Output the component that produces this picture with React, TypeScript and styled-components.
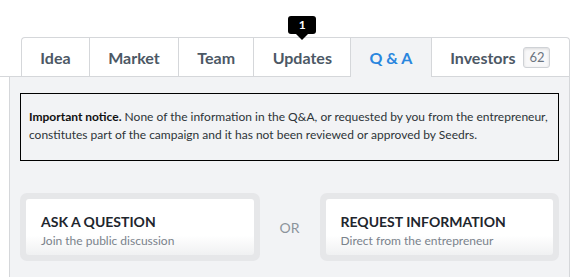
import React from 'react';
import styled, { createGlobalStyle } from 'styled-components';

const GlobalStyle = createGlobalStyle`
  body {
    margin: 0;
    background: #fff;
    font-family: Lato, "Open Sans", sans-serif;
  }
`;

interface Tab {
  label: string;
  count?: number;
  note?: number;
}

const tabs: Array<Tab> = [
  { label: 'Idea' },
  { label: 'Market' },
  { label: 'Team' },
  { label: 'Updates', note: 1 },
  { label: 'Q & A' },
  { label: 'Investors', count: 62 },
];

const App = () => {
  const active = 'Q & A';

  return (
    <Page>
      <GlobalStyle />
      <Nav>
        <TabList>
          {tabs.map((tab) => (
            <TabItem key={tab.label} active={tab.label === active}>
              {tab.label}
              {tab.count !== undefined && <Count>{tab.count}</Count>}
              {tab.note !== undefined && <Note>{tab.note}</Note>}
            </TabItem>
          ))}
        </TabList>
      </Nav>
      <Panel>
        <Notice>
          <strong>Important notice.</strong> None of the information in the
          Q&amp;A, or requested by you from the entrepreneur, constitutes part
          of the campaign and it has not been reviewed or approved by Seedrs.
        </Notice>
        <Actions>
          <Card>
            <CardInner>
              <CardTitle>ASK A QUESTION</CardTitle>
              <CardText>Join the public discussion</CardText>
            </CardInner>
          </Card>
          <Or>OR</Or>
          <Card>
            <CardInner>
              <CardTitle>REQUEST INFORMATION</CardTitle>
              <CardText>Direct from the entrepreneur</CardText>
            </CardInner>
          </Card>
        </Actions>
      </Panel>
    </Page>
  );
};

export default App;

const Page = styled.div`
  width: 570px;
  padding-top: 37px;
  height: 240px;
  overflow: hidden;
`;

const Nav = styled.div`
  display: flex;
  padding-left: 21px;
  border-bottom: 1px solid #d5d7da;
`;

const TabList = styled.div`
  display: flex;
  flex: 1;
`;

const TabItem = styled.div<{ active?: boolean }>`
  position: relative;
  display: flex;
  flex-shrink: 0;
  align-items: center;
  justify-content: center;
  padding: 0 18.3px;
  white-space: nowrap;
  border-top: 1px solid #d5d7da;
  border-left: 1px solid #d5d7da;
  background: ${(p) => (p.active ? '#f2f3f5' : '#fff')};
  color: ${(p) => (p.active ? '#2a86de' : '#4c5865')};
  font-size: 16px;
  font-weight: 700;
  margin-bottom: ${(p) => (p.active ? '-1px' : '0')};
  height: ${(p) => (p.active ? '39px' : '38px')};
  &:first-child {
    border-top-left-radius: 4px;
  }
  &:last-child {
    flex: 1 1 auto;
    border-right: 1px solid #d5d7da;
    border-top-right-radius: 4px;
  }
`;

const Count = styled.span`
  display: inline-flex;
  align-items: center;
  justify-content: center;
  margin-left: 8px;
  width: 27px;
  height: 21px;
  box-sizing: border-box;
  border: 1px solid #cfd2d6;
  border-radius: 3px;
  background: #f8f8f9;
  box-shadow: inset 0 1px 3px rgba(0, 0, 0, 0.12);
  color: #6b7480;
  font-size: 13px;
  font-weight: 400;
`;

const Note = styled.span`
  position: absolute;
  left: 50%;
  top: -22px;
  transform: translateX(-50%);
  width: 28px;
  height: 18px;
  border-radius: 3px;
  background: #000;
  color: #fff;
  font-size: 12px;
  font-weight: 700;
  line-height: 18px;
  text-align: center;
  &::after {
    content: '';
    position: absolute;
    left: 50%;
    top: 100%;
    margin-left: -6px;
    border: 6px solid transparent;
    border-top: 6px solid #000;
    border-bottom: 0;
  }
`;

const Panel = styled.div`
  margin-left: 9px;
  border-left: 1px solid #d5d7da;
  border-right: 1px solid #d5d7da;
  background: #f2f3f5;
  padding: 16px 10px 20px;
  height: 200px;
`;

const Notice = styled.div`
  border: 1px solid #000;
  padding: 14px 8px 16px;
  font-size: 12px;
  line-height: 18px;
  color: #2d3338;
  strong {
    color: #111;
  }
`;

const Actions = styled.div`
  display: grid;
  grid-template-columns: 1fr 60px 1fr;
  align-items: center;
  margin-top: 32px;
`;

const Card = styled.div`
  padding: 6px;
  border-radius: 7px;
  background: #e6e7e9;
`;

const CardInner = styled.div`
  height: 56px;
  box-sizing: border-box;
  padding: 14px 15px 0;
  border-radius: 3px;
  background: linear-gradient(to bottom, #fff 65%, #f0f1f2 100%);
`;

const CardTitle = styled.div`
  font-size: 14px;
  font-weight: 700;
  color: #1e262d;
  line-height: 18px;
`;

const CardText = styled.div`
  margin-top: 2px;
  font-size: 12px;
  color: #7a828b;
  line-height: 15px;
`;

const Or = styled.div`
  text-align: center;
  font-size: 14px;
  color: #8c939b;
`;
